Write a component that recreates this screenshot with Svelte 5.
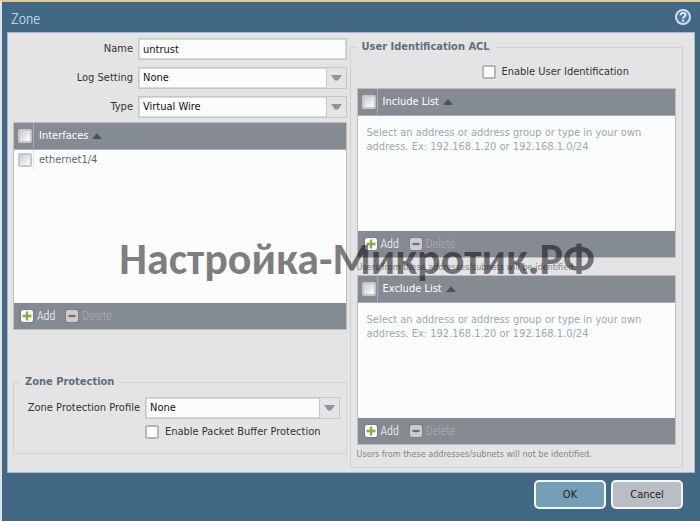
<script lang="ts">
  type Row = { name: string; selected: boolean };

  let name = $state("untrust");
  let logSetting = $state("None");
  let zoneType = $state("Virtual Wire");
  let profile = $state("None");
  let packetBuffer = $state(false);
  let userIdentification = $state(false);

  let interfaces: Row[] = $state([{ name: "ethernet1/4", selected: false }]);
  let included: Row[] = $state([]);
  let excluded: Row[] = $state([]);

  const hint =
    "Select an address or address group or type in your own address. Ex: 192.168.1.20 or 192.168.1.0/24";
</script>

{#snippet combo(id: string, value: string, options: string[], onpick: (v: string) => void)}
  <div class="combo">
    <select {id} {value} onchange={(e) => onpick(e.currentTarget.value)}>
      {#each options as option}
        <option>{option}</option>
      {/each}
    </select>
    <span class="trigger" aria-hidden="true">
      <svg width="11" height="6" viewBox="0 0 11 6">
        <path d="M0 0h11L7 5.500H4z" fill="#8a969f" />
      </svg>
    </span>
  </div>
{/snippet}

{#snippet list(title: string, rows: Row[], empty: string)}
  <div class="list">
    <div class="rows">
      <table>
        <thead>
          <tr>
            <th class="tick"><input type="checkbox" aria-label="Select all" /></th>
            <th>
              <button type="button" class="sort">
                {title}
                <svg width="10" height="6" viewBox="0 0 10 6" aria-hidden="true">
                  <path d="M5 0l5 6H0z" fill="#4d545d" />
                </svg>
              </button>
            </th>
          </tr>
        </thead>
        <tbody>
          {#each rows as row}
            <tr>
              <td class="tick">
                <input type="checkbox" aria-label={row.name} bind:checked={row.selected} />
              </td>
              <td>{row.name}</td>
            </tr>
          {:else}
            <tr>
              <td class="empty" colspan="2">{empty}</td>
            </tr>
          {/each}
        </tbody>
      </table>
    </div>
    <div class="toolbar">
      <button type="button">
        <svg width="14" height="14" viewBox="0 0 14 14" aria-hidden="true">
          <rect width="14" height="14" rx="3" fill="#6f7f90" />
          <rect x="1" y="1" width="12" height="12" rx="2" fill="#fbfcf8" />
          <path d="M7 2.5v9M2.5 7h9" stroke="#95a843" stroke-width="2.4" />
        </svg>
        Add
      </button>
      <button type="button" disabled={!rows.some((row) => row.selected)}>
        <svg width="14" height="14" viewBox="0 0 14 14" aria-hidden="true">
          <rect width="14" height="14" rx="3" fill="#78828f" />
          <rect x="1" y="1" width="12" height="12" rx="2" fill="#cbcbd0" />
          <path d="M3.5 7h7" stroke="#8b6553" stroke-width="2.2" />
        </svg>
        Delete
      </button>
    </div>
  </div>
{/snippet}

<div class="dialog" role="dialog" aria-labelledby="title">
  <header>
    <h1 id="title">Zone</h1>
    <button type="button" class="help" aria-label="Help">
      <svg width="16" height="16" viewBox="0 0 16 16">
        <circle cx="8" cy="8" r="7" fill="#4b7aa0" stroke="#d3e0eb" stroke-width="2" />
        <path
          d="M5.6 6.2c0-3 5-3 5-.3 0 1.900-2.500 1.600-2.500 3.700"
          fill="none"
          stroke="#e6eef5"
          stroke-width="2"
        />
        <rect x="7" y="10.600" width="2.200" height="2" fill="#e6eef5" />
      </svg>
    </button>
  </header>

  <main>
    <section class="general">
      <div class="fields">
        <div class="field">
          <label for="name">Name</label>
          <input id="name" type="text" bind:value={name} />
        </div>
        <div class="field">
          <label for="log">Log Setting</label>
          {@render combo("log", logSetting, ["None", "default"], (v) => (logSetting = v))}
        </div>
        <div class="field">
          <label for="type">Type</label>
          {@render combo("type", zoneType, ["Tap", "Virtual Wire", "Layer2", "Layer3"], (v) => (zoneType = v))}
        </div>
      </div>

      {@render list("Interfaces", interfaces, "")}

      <fieldset class="protection">
        <legend>Zone Protection</legend>
        <div class="field">
          <label for="profile">Zone Protection Profile</label>
          {@render combo("profile", profile, ["None", "default"], (v) => (profile = v))}
        </div>
        <label class="check">
          <input type="checkbox" bind:checked={packetBuffer} />
          Enable Packet Buffer Protection
        </label>
      </fieldset>
    </section>

    <fieldset class="acl">
      <legend>User Identification ACL</legend>
      <label class="check">
        <input type="checkbox" bind:checked={userIdentification} />
        Enable User Identification
      </label>
      {@render list("Include List", included, hint)}
      <p>Users from these addresses/subnets will be identified.</p>
      {@render list("Exclude List", excluded, hint)}
      <p>Users from these addresses/subnets will not be identified.</p>
    </fieldset>
  </main>

  <footer>
    <button type="button" class="ok">OK</button>
    <button type="button">Cancel</button>
  </footer>

  <div class="watermark">Настройка-Микротик.РФ</div>
</div>

<style>
  :global(body) {
    margin: 0;
  }
  .dialog {
    --ui: "DejaVu Sans Condensed", "DejaVu Sans", sans-serif;
    --narrow: "Roboto Condensed", Roboto, sans-serif;
    position: relative;
    box-sizing: border-box;
    min-height: 100vh;
    padding: 0 5px;
    border-top: 2px solid #dccb97;
    border-left: 2px solid #dfe5e6;
    background: #416986;
    color: #333;
    font: 11px/16px var(--ui);
  }
  button,
  input,
  select {
    font: inherit;
    color: inherit;
    margin: 0;
    box-sizing: border-box;
  }
  svg {
    display: block;
    flex: none;
  }

  header {
    display: flex;
    align-items: center;
    justify-content: space-between;
    height: 30px;
    padding: 0 4px;
  }
  h1 {
    margin: 0;
    padding-top: 4px;
    color: #d7e2ea;
    font: 300 15px/26px var(--narrow);
  }
  .help {
    padding: 0;
    border: 0;
    background: none;
  }

  main {
    display: grid;
    grid-template-columns: 1fr 1fr;
    gap: 3px;
    padding: 5px 11px 4px 5px;
    border: 1px solid #a9b9c4;
    background: #e4e4e4;
  }
  .general {
    display: flex;
    flex-direction: column;
  }
  .fields {
    display: grid;
    gap: 7px;
    margin-bottom: 4px;
  }
  .field {
    display: flex;
    align-items: center;
    gap: 5px;
  }
  .field > label {
    width: 120px;
    text-align: right;
    white-space: nowrap;
  }
  .field > input,
  .combo {
    flex: 1;
    min-width: 0;
    height: 22px;
    border: 1px solid #c3c8c9;
    outline: 1px solid #d7dada;
    outline-offset: -2px;
    background: #fbfdfd;
    color: #111;
  }
  .field > input {
    padding: 0 4px;
  }
  .combo {
    position: relative;
    box-sizing: border-box;
    display: flex;
  }
  .combo select {
    flex: 1;
    padding: 0 24px 0 4px;
    border: 0;
    background: none;
    appearance: none;
  }
  .trigger {
    position: absolute;
    inset: 0 0 0 auto;
    display: grid;
    place-items: center;
    width: 19px;
    border-left: 1px solid #c3c8c9;
    background: #e4e4e4;
    pointer-events: none;
  }

  input[type="checkbox"] {
    flex: none;
    width: 14px;
    height: 14px;
    border: 2px solid #b2b7bc;
    border-radius: 2px;
    background: #fbfdfd;
    appearance: none;
  }
  input[type="checkbox"]:checked {
    background: #416986;
  }
  .check {
    display: flex;
    align-items: center;
    gap: 6px;
    padding-left: 125px;
  }

  .list {
    display: flex;
    flex-direction: column;
    border: 1px solid #b9bec2;
    background: #858b93;
  }
  .rows {
    min-height: 142px;
    background: #fbfdfd;
  }
  .general .list {
    min-height: 206px;
  }
  .general .rows {
    flex: 1;
  }
  table {
    width: 100%;
    border-collapse: collapse;
    color: #5d666f;
  }
  th {
    height: 26px;
    padding: 0;
    border-bottom: 1px solid #a9aeb3;
    background: #858b93;
    font-weight: normal;
    text-align: left;
  }
  td {
    padding: 2px 5px;
  }
  .tick {
    width: 19px;
    padding: 0;
    border-right: 1px solid #a9aeb3;
  }
  td.tick {
    border-color: #e2e5e5;
  }
  .tick input {
    display: block;
    margin: 0 1px 0 auto;
    border: 2px solid #c5c7c9;
    background: linear-gradient(135deg, #c9cbcc, #fff);
  }
  .sort {
    display: flex;
    align-items: center;
    gap: 4px;
    padding: 0 5px;
    border: 0;
    background: none;
    color: #fff;
  }
  .empty {
    padding: 10px 9px;
    color: #9aa8b5;
    line-height: 14px;
  }
  .toolbar {
    display: flex;
    gap: 10px;
    height: 26px;
    padding: 0 6px;
  }
  .toolbar button {
    display: flex;
    align-items: center;
    gap: 3px;
    padding: 0;
    border: 0;
    background: none;
    color: #fff;
    font: 300 12px/16px var(--narrow);
  }
  .toolbar button:disabled {
    color: #acb0b6;
  }

  fieldset {
    min-width: 0;
    margin: 0;
    border: 1px solid #cfd1d2;
  }
  legend {
    padding: 0 5px;
    color: #5d6f7c;
    font-weight: bold;
    line-height: 18px;
  }
  .protection {
    margin-top: 43px;
    padding: 6px 6px 13px;
  }
  .protection .check {
    margin-top: 5px;
  }
  .acl {
    padding: 8px 6px 5px;
  }
  .acl .check {
    margin-bottom: 8px;
  }
  p {
    margin: 0;
    padding-top: 2px;
    color: #858585;
    font-size: 9px;
    line-height: 15px;
  }

  footer {
    display: flex;
    justify-content: flex-end;
    gap: 5px;
    padding: 7px 12px 10px;
  }
  footer button {
    width: 72px;
    height: 29px;
    padding: 0;
    border: 2px solid #f5f7f8;
    border-radius: 5px;
    background: #b9bdc4;
    color: #222;
  }
  footer .ok {
    background: #759fb6;
  }

  /* site mark printed across the dialog */
  .watermark {
    position: absolute;
    inset: 233px 0 auto 12px;
    color: rgba(0, 0, 0, 0.5);
    font: bold 44px/48px Carlito, Lato, sans-serif;
    text-align: center;
    pointer-events: none;
  }
</style>
